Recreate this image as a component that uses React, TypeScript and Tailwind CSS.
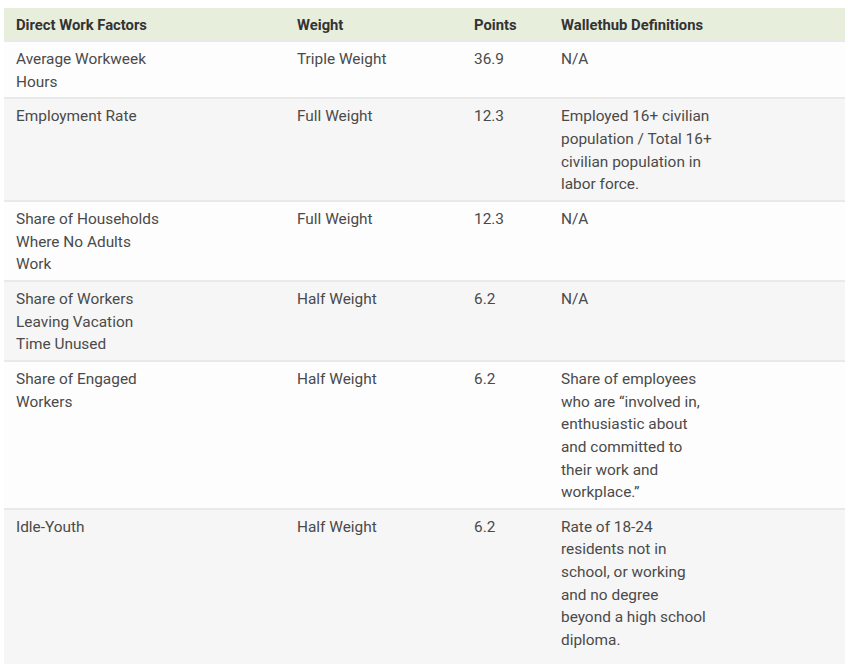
import React from "react";

const rows: { f: string[]; w: string; p: string; d: string[] }[] = [
  { f: ["Average Workweek", "Hours"], w: "Triple Weight", p: "36.9", d: ["N/A"] },
  {
    f: ["Employment Rate"],
    w: "Full Weight",
    p: "12.3",
    d: ["Employed 16+ civilian", "population / Total 16+", "civilian population in", "labor force."],
  },
  { f: ["Share of Households", "Where No Adults", "Work"], w: "Full Weight", p: "12.3", d: ["N/A"] },
  { f: ["Share of Workers", "Leaving Vacation", "Time Unused"], w: "Half Weight", p: "6.2", d: ["N/A"] },
  {
    f: ["Share of Engaged", "Workers"],
    w: "Half Weight",
    p: "6.2",
    d: [
      "Share of employees",
      "who are \u201cinvolved in,",
      "enthusiastic about",
      "and committed to",
      "their work and",
      "workplace.\u201d",
    ],
  },
  {
    f: ["Idle-Youth"],
    w: "Half Weight",
    p: "6.2",
    d: [
      "Rate of 18-24",
      "residents not in",
      "school, or working",
      "and no degree",
      "beyond a high school",
      "diploma.",
    ],
  },
];

export default function App() {
  return (
    <div
      className="w-[848px] h-[664px] overflow-hidden bg-white pt-[8px] pl-[4px] pr-[3px] flex flex-col"
      style={{ fontFamily: "Roboto, 'Liberation Sans', sans-serif" }}
    >
      <div className="grid grid-cols-[281px_177px_87px_1fr] bg-[#e8eedc] text-[14.8px] leading-[22px] font-bold text-[#333] pt-[6px] pb-[4px]">
        <div className="pl-[12px]">Direct Work Factors</div>
        <div className="pl-[12px]">Weight</div>
        <div className="pl-[12px]">Points</div>
        <div className="pl-[12px]">Wallethub Definitions</div>
      </div>
      {rows.map((r, i) => (
        <div
          key={i}
          className={
            "grid grid-cols-[281px_177px_87px_1fr] content-start text-[15.4px] leading-[22.65px] text-[#4a4a4a] pt-[6px] pb-[4px] border-t-2 border-[#e9e9e9] " +
            (i % 2 === 1 ? "bg-[#f6f6f6]" : "bg-[#fdfdfd]") +
            (i === rows.length - 1 ? " flex-1" : "")
          }
        >
          <div className="pl-[12px] whitespace-nowrap">
            {r.f.map((l, j) => (
              <div key={j}>{l}</div>
            ))}
          </div>
          <div className="pl-[12px]">{r.w}</div>
          <div className="pl-[12px]">{r.p}</div>
          <div className="pl-[12px] whitespace-nowrap">
            {r.d.map((l, j) => (
              <div key={j}>{l}</div>
            ))}
          </div>
        </div>
      ))}
    </div>
  );
}
